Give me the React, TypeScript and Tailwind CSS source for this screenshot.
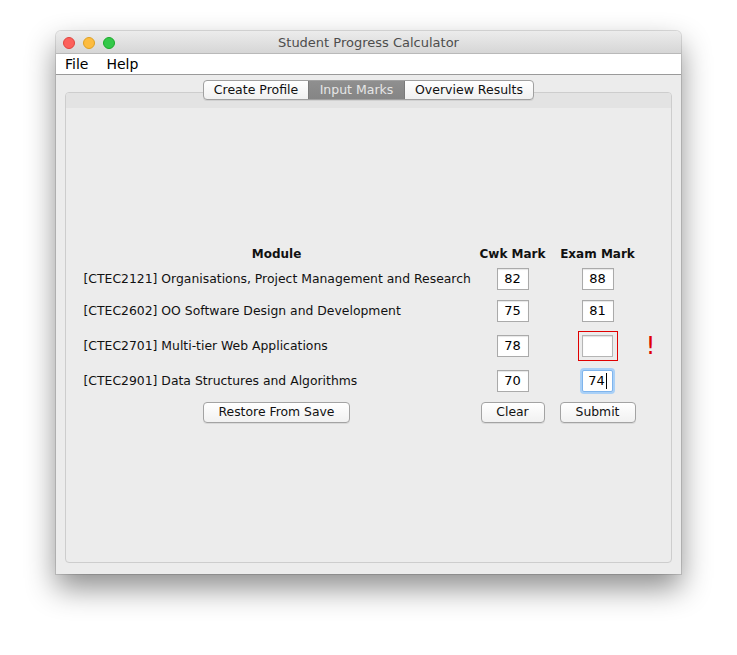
import React from 'react';

const font = { fontFamily: '"DejaVu Sans", "Liberation Sans", sans-serif' };

type Row = { code: string; name: string; cwk: string; exam: string; state?: 'error' | 'focus' };

const rows: Row[] = [
  { code: 'CTEC2121', name: 'Organisations, Project Management and Research', cwk: '82', exam: '88' },
  { code: 'CTEC2602', name: 'OO Software Design and Development', cwk: '75', exam: '81' },
  { code: 'CTEC2701', name: 'Multi-tier Web Applications', cwk: '78', exam: '', state: 'error' },
  { code: 'CTEC2901', name: 'Data Structures and Algorithms', cwk: '70', exam: '74', state: 'focus' },
];

const MarkBox = ({ value, state }: { value: string; state?: 'error' | 'focus' }) => {
  if (state === 'error') {
    return (
      <div className="flex h-[30px] w-[40px] items-center justify-center border border-[#e00000]">
        <div className="h-[22px] w-[31px] border border-[#b5b5b5] bg-white shadow-[inset_0_1px_1px_rgba(0,0,0,0.12)]" />
      </div>
    );
  }
  if (state === 'focus') {
    return (
      <div className="flex h-[22px] w-[31px] items-center justify-center rounded-[2px] border border-[#7fb4ec] bg-white text-[13px] text-black shadow-[0_0_0_2px_#a9d0f7]">
        <span>{value}</span>
        <span className="ml-px h-[16px] w-px bg-black" />
      </div>
    );
  }
  return (
    <div className="flex h-[22px] w-[32px] items-center justify-center border border-[#aaaaaa] bg-white text-[13px] text-black shadow-[inset_0_1px_1px_rgba(0,0,0,0.1)]">
      {value}
    </div>
  );
};

const Button = ({ label, width }: { label: string; width: string }) => (
  <div
    className={`flex h-[21px] ${width} items-center justify-center rounded-[4px] border border-[#a3a3a3] bg-gradient-to-b from-white to-[#f1f1f1] text-[12.4px] text-[#111] shadow-[0_1px_0_rgba(0,0,0,0.08)]`}
  >
    {label}
  </div>
);

export default function App() {
  return (
    <div className="h-[655px] w-[737px] bg-white pl-[56px] pt-[31px]" style={font}>
      <div className="flex h-[543px] w-[625px] flex-col overflow-hidden rounded-t-[5px] bg-[#ececec] shadow-[0_14px_30px_rgba(0,0,0,0.45),0_0_0_1px_rgba(0,0,0,0.12)]">
        {/* Title bar */}
        <div className="relative flex h-[23px] shrink-0 items-center justify-center border-b border-[#b9b9b9] bg-gradient-to-b from-[#ececec] to-[#d6d6d6] pt-[2px]">
          <div className="absolute left-[7px] top-[6px] flex gap-[8px]">
            <span className="h-[12px] w-[12px] rounded-full border border-[#e0443e] bg-[#fc605b]" />
            <span className="h-[12px] w-[12px] rounded-full border border-[#dea123] bg-[#fdbc40]" />
            <span className="h-[12px] w-[12px] rounded-full border border-[#1aab29] bg-[#34c84a]" />
          </div>
          <span className="text-[13px] text-[#4d4d4d]">Student Progress Calculator</span>
        </div>

        {/* Menu bar */}
        <div className="flex h-[21px] shrink-0 items-center gap-[18px] border-b border-[#9a9a9a] bg-white pl-[9px] pt-[1px] text-[14px] text-black">
          <span>File</span>
          <span>Help</span>
        </div>

        {/* Tabbed pane */}
        <div className="relative flex flex-1 flex-col px-[9px] pb-[11px] pt-[17px]">
          <div className="absolute left-0 right-0 top-[5px] flex justify-center">
            <div className="flex h-[20px] overflow-hidden rounded-[4px] border border-[#a0a0a0] bg-gradient-to-b from-white to-[#f0f0f0] text-[12.5px] shadow-[0_1px_0_rgba(0,0,0,0.08)]">
              <div className="flex w-[104px] items-center justify-center text-[#111]">Create Profile</div>
              <div className="flex w-[97px] items-center justify-center border-x border-[#7a7a7a] bg-gradient-to-b from-[#8f8f8f] to-[#858585] text-[#e6e6e6]">
                Input Marks
              </div>
              <div className="flex w-[128px] items-center justify-center text-[#111]">Overview Results</div>
            </div>
          </div>

          <div className="flex flex-1 flex-col overflow-hidden rounded-[4px] border border-[#cdcdcd]">
            <div className="h-[15px] shrink-0 bg-[#e3e3e3]" />
            <div className="flex flex-1 items-center justify-center pb-[2px] pl-[8px]">
              <div className="grid grid-cols-[386px_86px_84px_22px] text-[12.4px] text-[#111]">
                <div className="flex h-[18px] items-center justify-center text-[12px] font-bold">Module</div>
                <div className="flex h-[18px] items-center justify-center text-[12px] font-bold">Cwk Mark</div>
                <div className="flex h-[18px] items-center justify-center text-[12px] font-bold">Exam Mark</div>
                <div />

                {rows.map((r, i) => {
                  const h = r.state === 'error' ? 'h-[30px]' : 'h-[22px]';
                  const mt = i === 0 ? 'mt-[5px]' : r.state === 'error' ? 'mt-[9px]' : r.state === 'focus' ? 'mt-[9px]' : 'mt-[10px]';
                  return (
                    <React.Fragment key={r.code}>
                      <div className={`${h} ${mt} flex items-center whitespace-nowrap`}>
                        [{r.code}] {r.name}
                      </div>
                      <div className={`${h} ${mt} flex items-center justify-center`}>
                        <MarkBox value={r.cwk} />
                      </div>
                      <div className={`${h} ${mt} flex items-center justify-center`}>
                        <MarkBox value={r.exam} state={r.state} />
                      </div>
                      <div className={`${h} ${mt} flex items-center justify-center`}>
                        {r.state === 'error' && (
                          <span className="text-[24px] leading-none text-[#e00000]">!</span>
                        )}
                      </div>
                    </React.Fragment>
                  );
                })}

                <div className="mt-[10px] flex justify-center">
                  <Button label="Restore From Save" width="w-[147px]" />
                </div>
                <div className="mt-[10px] flex justify-center">
                  <Button label="Clear" width="w-[64px]" />
                </div>
                <div className="mt-[10px] flex justify-center">
                  <Button label="Submit" width="w-[76px]" />
                </div>
                <div />
              </div>
            </div>
          </div>
        </div>
      </div>
    </div>
  );
}
